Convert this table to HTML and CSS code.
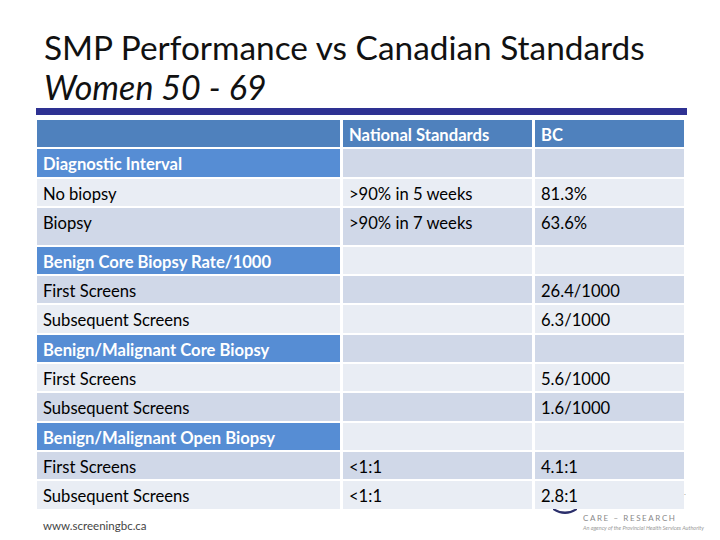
FILE: index.html
```html
<!DOCTYPE html>
<html>
<head>
<meta charset="utf-8">
<link rel="stylesheet" href="styles.css">
</head>
<body>
<div class="slide">
  <header class="title">
    <h1>SMP Performance vs Canadian Standards</h1>
    <h2>Women 50 - 69</h2>
  </header>
  <div class="rule"></div>
  <div class="table">
    <div class="row head"><div class="c"></div><div class="c">National Standards</div><div class="c">BC</div></div>
    <div class="row sec dark"><div class="c">Diagnostic Interval</div><div class="c"></div><div class="c"></div></div>
    <div class="row light"><div class="c">No biopsy</div><div class="c">&gt;90% in 5 weeks</div><div class="c">81.3%</div></div>
    <div class="row dark tall"><div class="c">Biopsy</div><div class="c">&gt;90% in 7 weeks</div><div class="c">63.6%</div></div>
    <div class="row sec light"><div class="c">Benign Core Biopsy Rate/1000</div><div class="c"></div><div class="c"></div></div>
    <div class="row dark"><div class="c">First Screens</div><div class="c"></div><div class="c">26.4/1000</div></div>
    <div class="row light"><div class="c">Subsequent Screens</div><div class="c"></div><div class="c">6.3/1000</div></div>
    <div class="row sec dark"><div class="c">Benign/Malignant Core Biopsy</div><div class="c"></div><div class="c"></div></div>
    <div class="row light"><div class="c">First Screens</div><div class="c"></div><div class="c">5.6/1000</div></div>
    <div class="row dark"><div class="c">Subsequent Screens</div><div class="c"></div><div class="c">1.6/1000</div></div>
    <div class="row sec light"><div class="c">Benign/Malignant Open Biopsy</div><div class="c"></div><div class="c"></div></div>
    <div class="row dark"><div class="c">First Screens</div><div class="c">&lt;1:1</div><div class="c">4.1:1</div></div>
    <div class="row light"><div class="c">Subsequent Screens</div><div class="c">&lt;1:1</div><div class="c">2.8:1</div></div>
  </div>
  <footer class="footer">
    <span class="url">www.screeningbc.ca</span>
  </footer>
  <div class="logo">
    <svg class="arc" width="28" height="16" viewBox="0 0 28 16"><path d="M2 2 Q14 9 26 2 L26 4 Q14 12 2 4 Z" fill="#2b2f6b"/></svg>
    <div class="care">CARE – RESEARCH</div>
    <div class="agency">An agency of the Provincial Health Services Authority</div>
  </div>
  <span class="dot">.</span>
</div>
</body>
</html>
```
FILE: styles.css
```css
html, body {
  margin: 0;
  padding: 0;
  background: #fff;
}
.slide {
  position: relative;
  width: 720px;
  height: 540px;
  overflow: hidden;
  font-family: Lato, "Open Sans", sans-serif;
  color: #000;
}
.title {
  padding: 27px 0 0 44px;
}
.title h1, .title h2 {
  margin: 0;
  font-size: 33.4px;
  line-height: 40px;
  font-weight: 400;
  color: #111;
}
.title h1 {
  height: 40px;
}
.title h2 {
  font-style: italic;
  font-size: 34px;
  height: 41px;
}
.rule {
  margin-left: 36px;
  width: 651px;
  height: 7px;
  background: #2e3192;
}
.table {
  position: relative;
  z-index: 1;
  margin: 5px 0 0 37px;
  display: flex;
  flex-direction: column;
  gap: 2px;
  width: 647px;
}
.row {
  display: grid;
  grid-template-columns: 303px 189px 149px;
  column-gap: 3px;
  height: 27.3px;
}
.row.tall {
  height: 37px;
}
.c {
  padding: 3px 0 0 6px;
  font-size: 16.6px;
  line-height: 24px;
  white-space: nowrap;
}
.dark .c { background: #d0d8e8; }
.light .c { background: #e9edf4; }
.head .c {
  background: #4f81bd;
  color: #fff;
  font-weight: 700;
}
.sec .c:first-child {
  background: #568dd4;
  color: #fff;
  font-weight: 700;
}
.footer {
  padding: 5px 0 0 43px;
}
.url {
  font-size: 11.5px;
  color: #444;
}
.logo {
  position: absolute;
  left: 550px;
  top: 500px;
  z-index: 0;
}
.arc {
  position: absolute;
  left: 1px;
  top: 6px;
}
.care {
  position: absolute;
  left: 33px;
  top: 13px;
  font-size: 8px;
  letter-spacing: 1.6px;
  color: #8a8a8a;
  white-space: nowrap;
}
.agency {
  position: absolute;
  left: 33px;
  top: 25px;
  font-size: 5.5px;
  font-style: italic;
  color: #999;
  white-space: nowrap;
}
.dot {
  position: absolute;
  left: 684px;
  top: 487px;
  font-size: 8px;
  color: #999;
}
```
